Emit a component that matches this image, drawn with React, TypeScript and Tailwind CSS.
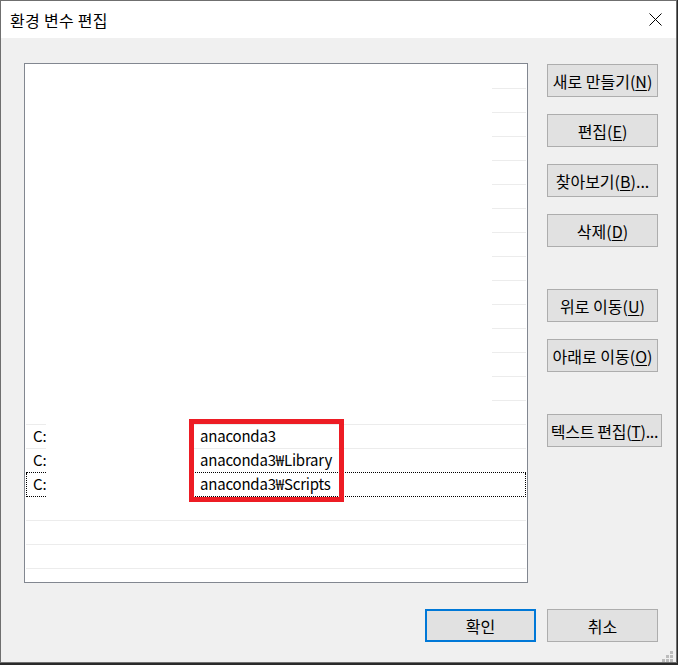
import React from "react";

const emptyRows = Array.from({ length: 14 });
const tailRows = Array.from({ length: 3 });

const entries = [
  { drive: "C:", path: "anaconda3" },
  { drive: "C:", path: "anaconda3₩Library" },
  { drive: "C:", path: "anaconda3₩Scripts" },
];

const sideButtons = [
  { label: "새로 만들기", key: "N", suffix: "", gap: "" },
  { label: "편집", key: "E", suffix: "", gap: "mt-[17px]" },
  { label: "찾아보기", key: "B", suffix: "...", gap: "mt-[17px]" },
  { label: "삭제", key: "D", suffix: "", gap: "mt-[17px]" },
  { label: "위로 이동", key: "U", suffix: "", gap: "mt-[42px]" },
  { label: "아래로 이동", key: "O", suffix: "", gap: "mt-[17px]" },
];

const Grip = () => (
  <div className="absolute right-[3px] bottom-0 grid grid-cols-3 gap-[1px]">
    {[0, 0, 1, 0, 1, 1, 1, 1, 1].map((on, i) => (
      <div
        key={i}
        className={on ? "w-[3px] h-[3px] bg-[#bcbcbc]" : "w-[3px] h-[3px]"}
      />
    ))}
  </div>
);

const App = () => {
  return (
    <div className="w-[678px] h-[665px] bg-[#2a2a2a] overflow-hidden font-['Noto_Sans_CJK_KR',sans-serif] text-[15px] text-black">
      {/* window */}
      <div className="relative w-[677px] h-[663px] border border-[#6f6f6f] bg-[#f0f0f0] flex flex-col">
        {/* title bar */}
        <div className="h-[37px] bg-white flex items-center justify-between pl-[9px] pr-[14px]">
          <span className="leading-none text-[16px] tracking-[0.3px]">환경 변수 편집</span>
          <svg width="13" height="13" viewBox="0 0 13 13">
            <path d="M0.5 0.5 L12.5 12.5 M12.5 0.5 L0.5 12.5" stroke="#000" strokeWidth="1" fill="none" />
          </svg>
        </div>

        {/* body */}
        <div className="flex pl-[23px] pt-[25px]">
          {/* list */}
          <div className="relative w-[504px] h-[520px] border border-[#828790] bg-white pt-[1px] px-[1px] overflow-hidden">
            {emptyRows.map((_, i) => (
              <div key={i} className="h-[24px] flex justify-end">
                <div className="w-[34px] h-full border-b border-[#ececec]" />
              </div>
            ))}
            {/* row above entries */}
            <div className="h-[24px] flex">
              <div className="w-[20px] h-full border-b border-[#ececec]" />
              <div className="w-[144px] h-full" />
              <div className="flex-1 h-full border-b border-[#ececec]" />
            </div>
            {entries.map((e, i) => {
              const focused = i === 2;
              const beforeFocus = i === 1;
              const line = focused || beforeFocus ? "border-dotted border-[#000]" : "border-[#ececec]";
              return (
                <div key={i} className="h-[24px] flex">
                  <div
                    className={`w-[20px] h-full border-b ${line} overflow-hidden whitespace-nowrap flex items-center ${
                      focused ? "border-l pl-[6px]" : "pl-[7px]"
                    }`}
                  >
                    {e.drive}
                  </div>
                  <div className="w-[144px] h-full" />
                  <div
                    className={`flex-1 h-full border-b ${line} flex items-center pl-[10px] whitespace-nowrap tracking-[-0.2px] ${
                      focused ? "border-r" : ""
                    }`}
                  >
                    {e.path}
                  </div>
                </div>
              );
            })}
            {tailRows.map((_, i) => (
              <div key={i} className="h-[24px] border-b border-[#ececec]" />
            ))}

            {/* red annotation box */}
            <div className="absolute left-[164px] top-[355px] w-[155px] h-[83px] border-[5px] border-[#ed1c24]" />
          </div>

          {/* side buttons */}
          <div className="ml-[19px] mt-[1px] flex flex-col text-[16px]">
            {sideButtons.map((b) => (
              <button
                key={b.key}
                type="button"
                className={`${b.gap} w-[111px] h-[33px] bg-[#e1e1e1] border border-[#adadad] flex items-center justify-center whitespace-nowrap leading-none`}
              >
                {b.label}(<span className="underline underline-offset-2">{b.key}</span>){b.suffix}
              </button>
            ))}
            <button
              type="button"
              className="mt-[42px] w-[115px] h-[33px] bg-[#e1e1e1] border border-[#adadad] flex items-center justify-center whitespace-nowrap leading-none tracking-[-0.3px]"
            >
              텍스트 편집(<span className="underline underline-offset-2">T</span>)...
            </button>
          </div>
        </div>

        {/* bottom buttons */}
        <div className="flex justify-end gap-[11px] pr-[18px] mt-[26px] text-[16px]">
          <button
            type="button"
            className="w-[111px] h-[33px] bg-[#e1e1e1] border-2 border-[#0078d7] flex items-center justify-center leading-none"
          >
            확인
          </button>
          <button
            type="button"
            className="w-[111px] h-[33px] bg-[#e1e1e1] border border-[#adadad] flex items-center justify-center leading-none"
          >
            취소
          </button>
        </div>

        <Grip />
      </div>
    </div>
  );
};

export default App;
